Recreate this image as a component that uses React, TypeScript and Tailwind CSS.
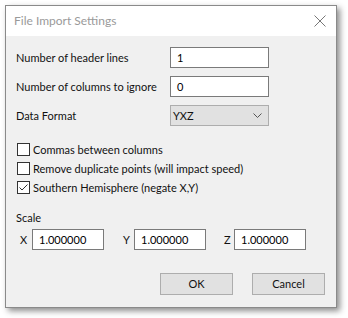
import React from "react";

const Field = (props: { value: string; className?: string }) => (
  <div
    className={`h-[21px] border border-[#7a7a7a] bg-white pl-[6px] flex items-center text-black ${props.className ?? ""}`}
  >
    {props.value}
  </div>
);

const Check = (props: { label: string; checked?: boolean }) => (
  <div className="flex items-center h-[19px]">
    <div className="w-[13px] h-[13px] border border-[#333] bg-white ml-[1px] mr-[3px] flex items-center justify-center">
      {props.checked && (
        <svg width="11" height="11" viewBox="0 0 11 11">
          <path d="M1.5 5.5 L4 8 L9.5 2.5" fill="none" stroke="#333" strokeWidth="1" />
        </svg>
      )}
    </div>
    <span className="whitespace-nowrap">{props.label}</span>
  </div>
);

export default function App() {
  return (
    <div className="w-[348px] h-[318px] bg-white pl-[5px] pt-[5px] font-['Lato',sans-serif] text-[11px] leading-[18px] text-[#111]">
      <div className="w-[332px] h-[303px] border border-[#8a8a8a] bg-[#f0f0f0] shadow-[3px_3px_6px_rgba(0,0,0,0.45)] flex flex-col">
        {/* title bar */}
        <div className="h-[30px] bg-white flex items-center justify-between pl-[8px] pr-[10px]">
          <span className="text-[12px] text-[#9a9a9a]">File Import Settings</span>
          <svg width="12" height="12" viewBox="0 0 12 12">
            <path d="M0.5 0.5 L11.5 11.5 M11.5 0.5 L0.5 11.5" stroke="#777" strokeWidth="1" />
          </svg>
        </div>

        <div className="flex-1 pl-[10px] pr-[11px] pt-[11px] flex flex-col">
          <div className="flex flex-col gap-[8px]">
            <div className="flex items-center">
              <span className="w-[154px] whitespace-nowrap">Number of header lines</span>
              <Field value="1" className="w-[99px]" />
            </div>
            <div className="flex items-center">
              <span className="w-[154px] whitespace-nowrap">Number of columns to ignore</span>
              <Field value="0" className="w-[99px]" />
            </div>
            <div className="flex items-center">
              <span className="w-[154px] whitespace-nowrap">Data Format</span>
              <div className="w-[99px] h-[21px] border border-[#adadad] bg-[#e1e1e1] pl-[2px] pr-[6px] flex items-center justify-between">
                <span>YXZ</span>
                <svg width="9" height="6" viewBox="0 0 9 6">
                  <path d="M0.5 0.5 L4.5 4.5 L8.5 0.5" fill="none" stroke="#555" strokeWidth="1" />
                </svg>
              </div>
            </div>
          </div>

          <div className="mt-[14px] flex flex-col">
            <Check label="Commas between columns" />
            <Check label="Remove duplicate points (will impact speed)" />
            <Check label="Southern Hemisphere (negate X,Y)" checked />
          </div>

          <div className="mt-[12px]">Scale</div>
          <div className="mt-[2px] flex items-center">
            <span className="w-[16px] pl-[4px]">X</span>
            <Field value="1.000000" className="w-[72px]" />
            <span className="w-[30px] pl-[19px]">Y</span>
            <Field value="1.000000" className="w-[72px]" />
            <span className="w-[28px] pl-[18px]">Z</span>
            <Field value="1.000000" className="w-[72px]" />
          </div>

          <div className="mt-auto mb-[12px] flex justify-end gap-[19px]">
            <button className="w-[73px] h-[22px] border border-[#adadad] bg-[#e1e1e1]">OK</button>
            <button className="w-[73px] h-[22px] border border-[#adadad] bg-[#e1e1e1]">Cancel</button>
          </div>
        </div>
      </div>
    </div>
  );
}
